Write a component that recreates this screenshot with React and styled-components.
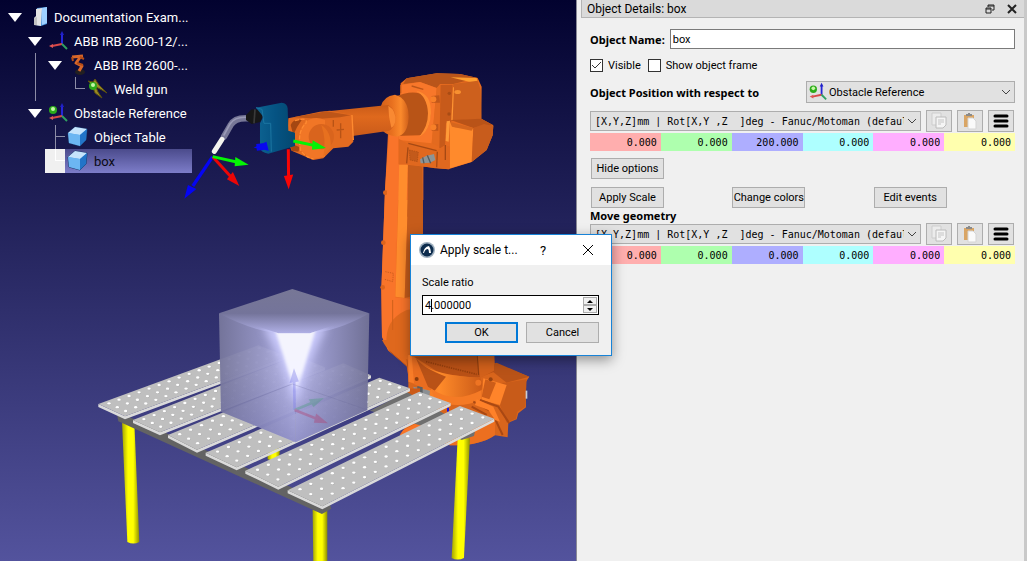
import React from 'react';
import styled, { createGlobalStyle, css } from 'styled-components';

const treeRows = [
    { label: 'Documentation Exam...', cells: ['open'], icon: 'station' },
    { label: 'ABB IRB 2600-12/...', cells: ['none', 'open'], icon: 'frame' },
    { label: 'ABB IRB 2600-...', cells: ['none', 'line', 'open'], icon: 'robot' },
    { label: 'Weld gun', cells: ['none', 'line', 'none', 'corner'], icon: 'tool' },
    { label: 'Obstacle Reference', cells: ['none', 'open'], icon: 'activeFrame' },
    { label: 'Object Table', cells: ['none', 'none', 'tee'], icon: 'object' },
    { label: 'box', cells: ['none', 'none', 'corner'], icon: 'object', selected: true },
];

const poseColors = ['#ffaeae', '#aeffae', '#aeaeff', '#aeffff', '#ffaeff', '#ffffae'];
const poseFormat = '[X,Y,Z]mm | Rot[X,Y ,Z\u00a0\u00a0]deg - Fanuc/Motoman (default)';

// corners of each board: left, front, right (front side), back (right side)
const boards = [
    [[25, 372], [105, 409], [590, 229], [505, 196]],
    [[129, 420], [210, 457], [705, 262], [620, 227]],
    [[234, 465], [321, 509], [843, 286], [760, 250]],
    [[347, 518], [440, 562], [960, 325], [868, 293]],
    [[466, 572], [565, 620], [1082, 369], [988, 335]],
    [[593, 631], [697, 679], [1213, 416], [1110, 378]],
];

const lerp = (a, b, t) => [a[0] + (b[0] - a[0]) * t, a[1] + (b[1] - a[1]) * t];
const points = (list) => list.map((p) => p.join(',')).join(' ');

const TreeIcon = ({ name }) => {
    if (name === 'station') {
        return (
            <svg width="24" height="24" viewBox="0 0 24 24" aria-hidden="true">
                <path d="M12 3 L22 2 L22 19 L16 21 L11 20 Z" fill="#4a94de" />
                <path d="M17 3 L22 2 L22 18 L17 20 Z" fill="#9fd0ff" />
                <path d="M11 4 L17 3 L16 21 L9 20 L9 13 L11 11 Z" fill="#e4e4e4" />
                <path d="M9 13 L12 12 L12 20 L9 20 Z" fill="#c2c2c2" />
            </svg>
        );
    }
    if (name === 'robot') {
        return (
            <svg width="24" height="24" viewBox="0 0 24 24" aria-hidden="true">
                <ellipse cx="15" cy="19" rx="5" ry="3" fill="#221f22" />
                <path d="M7 4 L18 3 M16 3 L11 10 L17 13 L14 18" fill="none" stroke="#d8672a" strokeWidth="3" strokeLinejoin="round" />
                <path d="M7 4 L8 8 M15 4 L19 6 M12 10 L18 12" fill="none" stroke="#b54c17" strokeWidth="2" />
            </svg>
        );
    }
    if (name === 'tool') {
        return (
            <svg width="24" height="24" viewBox="0 0 24 24" aria-hidden="true">
                <path d="M3 4 L8 5 L10 2 L14 8 L22 16 L17 13 L11 10 L13 15 L17 21 L10 16 L7 8 Z" fill="#9a8a24" stroke="#5a5010" />
                <Ball cx={8} cy={9} />
            </svg>
        );
    }
    if (name === 'object') {
        return (
            <svg width="24" height="24" viewBox="0 0 24 24" aria-hidden="true">
                <path d="M3 8 L10 2 L22 4 L21 15 L15 21 L4 18 Z" fill="#4ea3ea" stroke="#1c3a6c" strokeLinejoin="round" />
                <path d="M3 8 L10 2 L22 4 L15 10 Z" fill="#c6e4fc" />
                <path d="M3 8 L15 10 L15 21 L4 18 Z" fill="#6cb6f2" />
                <path d="M15 10 L22 4 L21 15 L15 21 Z" fill="#2274c8" />
            </svg>
        );
    }
    return (
        <svg width="24" height="24" viewBox="0 0 24 24" aria-hidden="true">
            <path d="M17 15 L17 5" stroke="#2525d8" strokeWidth="2" />
            <path d="M15 6 L17 2 L19 6 Z" fill="#2020c8" />
            <path d="M17 15 L7 17" stroke="#d84848" strokeWidth="2" />
            <path d="M4 17 L8 15 L8 19 Z" fill="#e05555" />
            <path d="M17 15 L22 20" stroke="#30a060" strokeWidth="2" />
            {name === 'activeFrame' && <Ball cx={8} cy={9} />}
        </svg>
    );
};

const Ball = ({ cx, cy }) => (
    <>
        <circle cx={cx} cy={cy} r="4" fill="#2cab1a" />
        <circle cx={cx} cy={cy - 1} r="2" fill="#c4f7a6" />
    </>
);

const Arrow = ({ from, to, color, width = 8 }) => {
    const angle = (Math.atan2(to[1] - from[1], to[0] - from[0]) * 180) / Math.PI;
    const end = lerp(to, from, 0.3);
    return (
        <g>
            <line x1={from[0]} y1={from[1]} x2={end[0]} y2={end[1]} stroke={color} strokeWidth={width} />
            <path d="M0 0 L-44 -14 L-40 14 Z" fill={color} transform={`translate(${to[0]} ${to[1]}) rotate(${angle})`} />
        </g>
    );
};

const Board = ({ corners }) => {
    const [left, front, right, back] = corners;
    const holes = [];
    for (let i = 0; i < 16; i++) {
        [0.15, 0.46, 0.77].forEach((v) => {
            const u = (i + 0.67) / 16;
            holes.push(lerp(lerp(left, front, v), lerp(back, right, v), u));
        });
    }
    const drop = (p) => [p[0], p[1] + 9];
    return (
        <g>
            <polygon points={points([left, front, right, drop(right), drop(front), drop(left)])} fill="#dadada" />
            <polygon points={points([left, front, right, back])} fill="#bfbfbf" />
            {holes.map((h, i) => (
                <g key={i}>
                    <ellipse cx={h[0] + 1} cy={h[1] + 1} rx="5.5" ry="4" fill="#b0b0b0" />
                    <ellipse cx={h[0]} cy={h[1]} rx="5" ry="3.5" fill="#fff" />
                </g>
            ))}
        </g>
    );
};

const Scene = () => (
    <SceneSvg viewBox="0 0 576 561" preserveAspectRatio="xMinYMin slice" role="img" aria-label="3D view">
        <defs>
            <linearGradient id="sky" x1="0" y1="0" x2="0" y2="1">
                <stop offset="0" stopColor="#02022f" />
                <stop offset="1" stopColor="#53539d" />
            </linearGradient>
            <linearGradient id="leg">
                <stop offset="0" stopColor="#a3a300" />
                <stop offset="0.35" stopColor="#ffff00" />
                <stop offset="0.65" stopColor="#ffff00" />
                <stop offset="1" stopColor="#8f8f00" />
            </linearGradient>
            <linearGradient id="arm" x1="0" y1="0" x2="0" y2="1">
                <stop offset="0" stopColor="#c95b18" />
                <stop offset="0.35" stopColor="#df691d" />
                <stop offset="1" stopColor="#c7591a" />
            </linearGradient>
            <linearGradient id="collar" x1="0" y1="0" x2="1" y2="0">
                <stop offset="0" stopColor="#d3601a" />
                <stop offset="0.4" stopColor="#e8701f" />
                <stop offset="0.72" stopColor="#fb8a2c" />
                <stop offset="1" stopColor="#d0601a" />
            </linearGradient>
            <linearGradient id="ring">
                <stop offset="0" stopColor="#e8691b" />
                <stop offset="0.35" stopColor="#ff8b2a" />
                <stop offset="1" stopColor="#cb5a17" />
            </linearGradient>
            <linearGradient id="cubeTop" x1="0" y1="0" x2="0" y2="1">
                <stop offset="0" stopColor="#777796" />
                <stop offset="0.55" stopColor="#74749a" />
                <stop offset="1" stopColor="#b0b0e6" />
            </linearGradient>
            <linearGradient id="cubeLeft">
                <stop offset="0" stopColor="#77779c" />
                <stop offset="0.55" stopColor="#9797c6" />
                <stop offset="1" stopColor="#bcbcf0" />
            </linearGradient>
            <linearGradient id="cubeRight">
                <stop offset="0" stopColor="#bcbcf0" />
                <stop offset="0.45" stopColor="#9797c6" />
                <stop offset="1" stopColor="#737397" />
            </linearGradient>
            <linearGradient id="cubeFade" x1="0" y1="0" x2="0" y2="1">
                <stop offset="0.45" stopColor="#6c6ca0" stopOpacity="0" />
                <stop offset="1" stopColor="#6c6ca8" stopOpacity="0.5" />
            </linearGradient>
            <linearGradient id="glow" x1="0" y1="0" x2="0" y2="1">
                <stop offset="0" stopColor="#f4f4fc" />
                <stop offset="0.75" stopColor="#f4f4ff" />
                <stop offset="1" stopColor="#e0e0ff" stopOpacity="0.8" />
            </linearGradient>
            <linearGradient id="mount">
                <stop offset="0" stopColor="#0d6492" />
                <stop offset="0.5" stopColor="#055383" />
                <stop offset="1" stopColor="#04486f" />
            </linearGradient>
            <filter id="haze" x="-50%" y="-20%" width="200%" height="140%">
                <feGaussianBlur stdDeviation="12" />
            </filter>
            <filter id="soft" x="-50%" y="-20%" width="200%" height="140%">
                <feGaussianBlur stdDeviation="5" />
            </filter>
            <clipPath id="cubeFront">
                <path d="M387 100 L565 160 L660 160 L838 100 L832 390 L617 487 L393 395 Z" />
            </clipPath>
        </defs>
        <rect width="1600" height="561" fill="url(#sky)" />

        {/* lower arm */}
        <g transform="translate(360 190) scale(0.3333)">
            <path d="M84 -170 L190 -170 L188 150 L200 480 L150 590 L140 528 L85 482 L66 440 L64 300 L75 0 Z" fill="#e9691f" />
            <path d="M87 -170 L120 -170 L106 322 L150 326 L155 360 L105 385 L82 440 L85 482 L66 440 L64 300 L75 0 Z" fill="#f9742a" />
            <path d="M118 -100 L146 -100 L145 0 L134 324 L106 320 L116 0 Z" fill="#ff8d2d" />
            <path d="M146 -100 L189 -100 L189 140 L152 140 L150 320 L134 324 L145 0 Z" fill="#c65c1b" />
            <path d="M80 465 Q72 390 140 360 L200 350 L200 540 L140 528 Z" fill="#df681d" />
            <path d="M98 330 L98 420" fill="none" stroke="#cf5f1b" strokeWidth="3" />
            <path d="M76 245 L100 250 L98 275 L74 268" fill="none" stroke="#b35017" strokeWidth="2" strokeDasharray="4 3" />
            <circle cx="76" cy="8" r="7" fill="#dd641c" />
            <circle cx="70" cy="158" r="7" fill="#dd641c" />
            <circle cx="68" cy="292" r="7" fill="#dd641c" />
            <path d="M140 500 L150 590 M88 482 L140 528" stroke="#b95317" strokeWidth="3" />
        </g>

        {/* base */}
        <g transform="translate(340 340) scale(0.3333)">
            <path d="M126 0 L210 0 L210 60 Q150 50 126 0 Z" fill="#df681d" />
            <path d="M205 40 L462 40 L464 70 L568 110 L558 125 L558 202 L535 220 L530 238 L505 248 L503 292 L465 286 Q420 318 330 316 L180 284 L240 200 L205 150 Z" fill="#d8651c" />
            <path d="M440 80 L470 68 L568 110 L500 128 Z" fill="#b95318" />
            <path d="M456 130 L500 128 L560 118 L556 200 L532 215 L528 236 L500 248 Z" fill="#c85b19" />
            <path d="M430 115 L500 135 L480 195 L425 180 Z" fill="#ff842a" />
            <path d="M436 118 L468 128 L448 178 L425 170 Z" fill="#cd5d19" />
            <path d="M222 50 L462 45 L463 95 L410 115 L300 100 Z" fill="#b95116" />
            <path d="M413 45 L463 45 L462 92 L420 115 Z" fill="#d2611b" />
            <path d="M228 62 Q290 110 420 112 Q440 150 400 175 L280 190 L228 130 Z" fill="url(#ring)" />
            <path d="M204 45 L228 55 L282 150 L262 150 L206 125 Z" fill="#e96d20" />
            <path d="M205 45 L215 45 L222 130 L206 125 Z" fill="#f87c28" />
            <path d="M228 55 Q250 85 318 110 L284 152 L264 140 Z" fill="#b95217" />
            <path d="M272 145 Q340 195 425 150 L425 180 Q350 210 285 180 Z" fill="#f57a25" />
            <path d="M258 65 L410 103" stroke="#963f0d" strokeWidth="5" strokeDasharray="4 3" />
            <path d="M412 48 L416 105" stroke="#8f3e0f" strokeWidth="3" />
            <path d="M400 185 L455 215 L488 285 M395 200 L440 225 M420 180 L475 200 L508 250" fill="none" stroke="#a94813" strokeWidth="6" />
            <path d="M410 178 L460 200 L480 245 L465 240 L445 210 L405 195 Z" fill="#ff8129" />
            <circle cx="230" cy="117" r="6" fill="#8a3c0d" />
            <circle cx="415" cy="128" r="9" fill="#ee7423" />
            <circle cx="452" cy="118" r="6" fill="#984310" />
            <path d="M330 210 Q420 250 465 240 L465 285 Q420 318 330 316 Z" fill="#ec6f20" />
            <path d="M220 140 L270 152 L268 175 L225 160 Z" fill="#8b8f93" />
            <path d="M232 138 L248 142 L248 165 L232 162 Z" fill="#5b6064" />
            <path d="M200 146 L240 145 L240 165 L200 170 Z" fill="#cc5a17" />
            <path d="M180 284 L190 270 L240 245 L260 255 L200 290 Z" fill="#f97525" />
            <rect x="557" y="152" width="5" height="24" fill="#c8ccd6" />
            <rect x="321" y="203" width="6" height="12" fill="#1515e8" />
        </g>

        {/* upper arm and wrist */}
        <g transform="translate(340 60) scale(0.3333)">
            <path d="M147 225 L250 225 L250 420 L140 420 Z" fill="#f9742a" />
            <path d="M178 300 L204 300 L200 420 L175 420 Z" fill="#ff8d2d" />
            <path d="M204 300 L248 310 L249 470 L202 470 Z" fill="#c65c1b" />
            <path d="M182 70 L200 55 L290 40 L360 42 L413 54 L425 80 L424 176 L460 196 L458 226 L440 270 L395 306 L325 328 L200 314 L176 314 L176 235 Z" fill="#e66b1f" />
            <path d="M200 55 L290 40 L360 42 L413 54 L340 72 L300 72 L290 84 L240 66 L190 72 Z" fill="#b9551a" />
            <path d="M332 52 L410 54 L414 70 L390 66 Z" fill="#ffa02f" />
            <path d="M340 72 L413 62 L422 90 L424 176 L335 182 Z" fill="#cd601d" />
            <path d="M182 75 L240 66 L290 84 L275 250 L176 240 Z" fill="#f8772a" />
            <path d="M290 84 L305 75 L298 260 L275 250 Z" fill="#e36a1f" />
            <path d="M302 75 L338 74 L334 185 L318 190 L315 260 L298 265 Z" fill="#c75a1a" />
            <path d="M339 82 L342 82 L338 180 L334 180 Z" fill="#ff9534" />
            <path d="M332 180 L424 176 L460 196 L400 204 Z" fill="#b95318" />
            <path d="M330 186 L345 202 L400 204 L396 305 L330 325 Z" fill="#ff8a2c" />
            <path d="M330 186 L400 204 L395 212 L336 200 Z" fill="#d5661e" />
            <path d="M400 204 L432 192 L460 198 L458 226 L440 270 L395 306 Z" fill="#c85c1c" />
            <path d="M320 184 L330 182 L326 245 L317 243 Z" fill="#ff9a38" />
            <path d="M200 250 L290 272 L315 255 L330 260 L328 328 L285 325 L200 312 L176 312 L176 236 Z" fill="#e0681f" />
            <path d="M205 250 L290 272 M204 262 L200 310 M292 275 L290 322 M316 255 L316 300" fill="none" stroke="#a54914" strokeWidth="4" />
            <path d="M208 270 L235 276 L232 305 L210 300 Z" fill="#c35a1b" stroke="#a84c14" strokeWidth="2" strokeDasharray="4 3" />
            <path d="M160 112 Q260 70 272 150 Q272 215 238 226 L165 228 Z" fill="#b85417" />
            <path d="M228 92 Q275 100 273 160 Q270 215 238 230 Q264 200 264 160 Q262 110 228 92 Z" fill="#ff8c31" />
            <path d="M122 140 Q130 108 165 104 Q205 115 206 170 Q204 225 170 230 Q140 225 128 212 Z" fill="url(#collar)" />
            <path d="M-30 153 L145 135 Q170 150 166 185 Q160 205 148 212 L-20 236 Z" fill="url(#arm)" />
            <path d="M145 137 Q170 152 166 185 Q162 200 154 203 Q145 170 145 137 Z" fill="#f98932" />
            <path d="M275 108 L298 106 L300 128 L275 128 Z M275 194 L295 192 L295 212 L275 212 Z" fill="#c1571a" />
            <circle cx="280" cy="118" r="9" fill="#f88028" />
            <circle cx="280" cy="202" r="9" fill="#f88028" />
            <ellipse cx="353" cy="96" rx="10" ry="6" fill="#f79030" />
            <circle cx="328" cy="100" r="5" fill="#a94c15" />
            <circle cx="327" cy="162" r="5" fill="#a94c15" />
            <path d="M240 298 L258 288 L282 282 L286 300 L270 308 L242 310 Z" fill="#8e9496" />
            <path d="M262 286 L272 310 M248 292 L252 310" stroke="#555b5e" strokeWidth="4" />
            <path d="M182 75 L182 100 M215 78 L250 88" stroke="#bd5619" strokeWidth="4" />
        </g>
        <g transform="translate(180 60) scale(0.3333)">
            <path d="M325 175 L420 155 L450 152 L515 165 L520 245 L505 260 L460 265 L430 295 L400 300 L335 272 L322 240 Z" fill="#e36b20" />
            <path d="M340 172 L440 154 L512 166 L480 172 L420 176 Z" fill="#bd5518" />
            <path d="M372 190 Q400 165 435 180 L435 290 L395 298 L360 270 Q350 220 372 190 Z" fill="#f17626" />
            <circle cx="424" cy="230" r="38" fill="#d9641d" />
            <path d="M424 195 Q455 215 452 262 L430 290 Q440 240 424 195 Z" fill="#e7701f" />
            <path d="M332 195 Q340 175 365 180 Q350 200 340 225 Z M330 250 L360 262 L355 275 L335 272 Z" fill="#a54712" />
            <path d="M345 182 Q385 170 378 190 Q350 215 362 272 Q380 294 400 296" fill="none" stroke="#ff8b32" strokeWidth="4" strokeDasharray="12 5" />
            <path d="M482 190 L482 235 M470 210 L492 208 M460 180 L460 200" stroke="#b85316" strokeWidth="4" />
            <path d="M516 165 L520 240" stroke="#ff8a30" strokeWidth="4" />
            <g fill="none" strokeLinecap="round">
                <path d="M205 175 Q165 172 152 195 L132 230" stroke="#777797" strokeWidth="19" />
                <path d="M200 172 Q165 170 150 192 L132 225" stroke="#9a9ab6" strokeWidth="5" />
                <path d="M126 238 L103 274" stroke="#f4f4ef" strokeWidth="15" />
            </g>
            <path d="M198 165 L215 148 L238 150 L248 170 L240 186 L215 192 L198 180 Z" fill="#171717" />
            <path d="M225 148 L222 190" stroke="#3a3a3a" strokeWidth="5" />
            <path d="M228 143 L305 128 Q322 130 323 145 L325 212 L345 218 L345 258 L265 281 Q242 278 240 262 L240 190 L250 170 Z" fill="url(#mount)" />
            <path d="M228 143 L246 148 L252 190 L272 190 L274 275" fill="none" stroke="#1b75a2" strokeWidth="3" />
            <Arrow from={[250, 260]} to={[221, 263]} color="#0808ef" width={20} />
            <Arrow from={[325, 268]} to={[326, 388]} color="#f90505" width={9} />
            <Arrow from={[340, 243]} to={[438, 264]} color="#05f305" width={9} />
            <Arrow from={[98, 290]} to={[13, 416]} color="#0505f4" width={10} />
            <Arrow from={[98, 290]} to={[178, 378]} color="#ec0606" width={9} />
            <Arrow from={[98, 290]} to={[206, 314]} color="#05f505" width={9} />
        </g>

        {/* table */}
        <g transform="translate(90 280) scale(0.3333)">
            <path d="M96 425 L133 425 L148 786 Q130 795 112 786 Z" fill="url(#leg)" />
            <path d="M668 690 L712 690 L712 850 L670 850 Z" fill="url(#leg)" />
            <path d="M1103 475 L1140 475 L1122 834 Q1103 843 1085 834 Z" fill="url(#leg)" />
            <path d="M533 505 L570 505 L568 532 Q550 545 533 538 Z" fill="url(#leg)" />
            <path d="M82 408 L110 408 L720 672 L724 686 L696 702 L85 424 Z" fill="#636363" />
            <path d="M840 392 L950 335 L1155 455 L1152 468 L1115 480 L1090 465 Z" fill="#6f6f6f" />
            {boards.map((corners, i) => (
                <Board key={i} corners={corners} />
            ))}
            <path d="M387 100 L612 160 L617 487 L393 395 Z" fill="url(#cubeLeft)" fillOpacity="0.95" />
            <path d="M838 100 L612 160 L617 487 L832 390 Z" fill="url(#cubeRight)" fillOpacity="0.95" />
            <path d="M387 100 L612 160 L838 100 L832 390 L617 487 L393 395 Z" fill="url(#cubeFade)" />
            <path d="M387 100 L607 27 L838 100 Q740 155 660 160 L565 160 Q480 150 387 100 Z" fill="url(#cubeTop)" />
            <g clipPath="url(#cubeFront)">
                <path d="M520 140 L710 140 Q655 240 624 360 L610 360 Q580 240 520 140 Z" fill="#c9c9fb" filter="url(#haze)" />
                <path d="M552 140 L680 140 Q652 230 624 325 L610 325 Q582 230 552 140 Z" fill="url(#glow)" filter="url(#soft)" />
            </g>
            <path d="M393 395 L607 312 L832 390" fill="none" stroke="#676795" strokeWidth="3" opacity="0.25" />
            <g opacity="0.4">
                <Arrow from={[614, 390]} to={[612, 265]} color="#7c7ce8" width={8} />
                <Arrow from={[614, 390]} to={[702, 354]} color="#4d9a80" width={8} />
                <Arrow from={[614, 390]} to={[714, 430]} color="#b04070" width={8} />
            </g>
        </g>
    </SceneSvg>
);

const PoseEditor = ({ name, values }) => (
    <div>
        <PoseBar>
            <SelectBox $grow>
                <Select $mono aria-label={`${name} format`} defaultValue="fanuc">
                    <option value="fanuc">{poseFormat}</option>
                </Select>
                <Chevron />
            </SelectBox>
            <ToolButton aria-label="Copy pose" disabled>
                <svg width="18" height="18" viewBox="0 0 18 18">
                    <path d="M2 1 H11 V13 H2 Z" fill="#ececec" stroke="#cdcdcd" />
                    <path d="M6 5 H16 V13 L13 16 H6 Z" fill="#f5f5f5" stroke="#bcbcbc" />
                    <path d="M8 8 H14 M8 10 H14 M8 12 H11" stroke="#c5c5c5" />
                </svg>
            </ToolButton>
            <ToolButton aria-label="Paste pose">
                <svg width="18" height="18" viewBox="0 0 18 18">
                    <path d="M3 3 H13 V15 H3 Z" fill="#d9a565" />
                    <path d="M5 4 V2 H7 V1 H9 V2 H11 V4 Z" fill="#8a8a8a" />
                    <path d="M7 6 H12 L15 9 V17 H7 Z" fill="#fafafa" stroke="#d5d5d5" />
                </svg>
            </ToolButton>
            <ToolButton aria-label="Pose menu">
                <svg width="18" height="18" viewBox="0 0 18 18">
                    <path d="M3 4 H15 M3 9 H15 M3 14 H15" stroke="#000" strokeWidth="3" strokeLinecap="round" />
                </svg>
            </ToolButton>
        </PoseBar>
        <PoseValues>
            {values.map((value, i) => (
                <PoseInput key={i} $color={poseColors[i]} defaultValue={value} aria-label={`${name} value ${i + 1}`} />
            ))}
        </PoseValues>
    </div>
);

const Chevron = () => (
    <ChevronSvg width="10" height="6" viewBox="0 0 10 6" aria-hidden="true">
        <path d="M1 1 L5 5 L9 1" fill="none" stroke="#444" />
    </ChevronSvg>
);

const ScaleDialog = () => (
    <Dialog role="dialog" aria-label="Apply scale">
        <DialogHeader>
            <svg width="16" height="16" viewBox="0 0 16 16" aria-hidden="true">
                <circle cx="8" cy="8" r="8" fill="#9fb0bf" />
                <circle cx="8" cy="8" r="6.5" fill="#0d2c4d" />
                <path d="M4 11 Q5 5 10 4 Q12 7 12 11 L10 11 Q10 8 9 7 Q6 7 5 11 Z" fill="#fff" />
            </svg>
            <DialogTitle>Apply scale t...</DialogTitle>
            <HelpButton aria-label="Help">?</HelpButton>
            <CloseButton aria-label="Close dialog">
                <svg width="12" height="12" viewBox="0 0 12 12">
                    <path d="M1 1 L11 11 M11 1 L1 11" stroke="#000" />
                </svg>
            </CloseButton>
        </DialogHeader>
        <DialogBody>
            <label htmlFor="scale-ratio">Scale ratio</label>
            <SpinBox>
                <SpinInput id="scale-ratio" defaultValue="4.000000" />
                <TextCursor />
                <SpinButtons>
                    <SpinButton aria-label="Increase">
                        <svg width="6" height="3" viewBox="0 0 6 3">
                            <path d="M0 3 L3 0 L6 3 Z" />
                        </svg>
                    </SpinButton>
                    <SpinButton aria-label="Decrease">
                        <svg width="6" height="3" viewBox="0 0 6 3">
                            <path d="M0 0 L3 3 L6 0 Z" />
                        </svg>
                    </SpinButton>
                </SpinButtons>
            </SpinBox>
            <DialogActions>
                <Button $primary>OK</Button>
                <Button>Cancel</Button>
            </DialogActions>
        </DialogBody>
    </Dialog>
);

const App = () => {
    return (
        <>
            <GlobalStyle />
            <Window>
                <Viewport>
                    <Scene />
                    <Tree role="tree">
                        {treeRows.map((row) => (
                            <TreeRow key={row.label} role="treeitem" aria-selected={!!row.selected}>
                                {row.cells.map((cell, i) => (
                                    <Branch key={i} $type={cell} $selected={row.selected && i === row.cells.length - 1}>
                                        {cell === 'open' && (
                                            <svg width="14" height="9" viewBox="0 0 14 9">
                                                <path d="M0 0 H14 L7 9 Z" fill="#fff" />
                                            </svg>
                                        )}
                                    </Branch>
                                ))}
                                <TreeLabel $selected={row.selected}>
                                    <TreeIcon name={row.icon} />
                                    {row.label}
                                </TreeLabel>
                            </TreeRow>
                        ))}
                    </Tree>
                </Viewport>
                <Dock>
                    <DockTitle>
                        <DockName>Object Details: box</DockName>
                        <DockButton aria-label="Float panel">
                            <svg width="10" height="10" viewBox="0 0 10 10">
                                <path d="M3 3 V1 H9 V6 H7 M1 4 H6 V9 H1 Z M1 5 H6 M3 2 H9" fill="none" stroke="#222" />
                            </svg>
                        </DockButton>
                        <DockButton aria-label="Close panel">
                            <svg width="10" height="10" viewBox="0 0 10 10">
                                <path d="M1 1 L9 9 M9 1 L1 9" stroke="#222" strokeWidth="2" />
                            </svg>
                        </DockButton>
                    </DockTitle>
                    <Form>
                        <NameRow>
                            <BoldLabel htmlFor="object-name">Object Name:</BoldLabel>
                            <NameInput id="object-name" defaultValue="box" />
                        </NameRow>
                        <CheckRow>
                            <CheckLabel>
                                <CheckBox type="checkbox" defaultChecked />
                                Visible
                            </CheckLabel>
                            <CheckLabel>
                                <CheckBox type="checkbox" />
                                Show object frame
                            </CheckLabel>
                        </CheckRow>
                        <ReferenceRow>
                            <BoldLabel htmlFor="reference">Object Position with respect to</BoldLabel>
                            <SelectBox>
                                <SelectIcon>
                                    <TreeIcon name="activeFrame" />
                                </SelectIcon>
                                <Select id="reference" $icon defaultValue="obstacle">
                                    <option value="obstacle">Obstacle Reference</option>
                                </Select>
                                <Chevron />
                            </SelectBox>
                        </ReferenceRow>
                        <PoseEditor name="Position" values={['0.000', '0.000', '200.000', '0.000', '0.000', '0.000']} />
                        <ButtonRow>
                            <Button>Hide options</Button>
                        </ButtonRow>
                        <ButtonRow>
                            <Button>Apply Scale</Button>
                            <Button>Change colors</Button>
                            <Button>Edit events</Button>
                        </ButtonRow>
                        <SectionTitle>Move geometry</SectionTitle>
                        <PoseEditor name="Geometry" values={['0.000', '0.000', '0.000', '0.000', '0.000', '0.000']} />
                    </Form>
                </Dock>
                <ScaleDialog />
            </Window>
        </>
    );
};

export default App;

const GlobalStyle = createGlobalStyle`
    * {
        box-sizing: border-box;
    }
    body {
        margin: 0;
        font-family: Roboto, sans-serif;
        font-size: 11px;
        color: #000;
    }
    button, input, select {
        margin: 0;
        padding: 0;
        font: inherit;
        color: inherit;
        border-radius: 0;
    }
    svg {
        flex-shrink: 0;
    }
`;

const flexCenter = css`
    display: flex;
    align-items: center;
    justify-content: center;
`;

const Window = styled.main`
    position: relative;
    display: grid;
    grid-template-columns: minmax(0, 576fr) minmax(0, 451fr);
    min-height: 100vh;
    overflow: hidden;
`;

const Viewport = styled.section`
    position: relative;
    overflow: hidden;
    background: #53539d;
`;

const SceneSvg = styled.svg`
    position: absolute;
    inset: 0;
    width: 100%;
    height: 100%;
`;

const Tree = styled.div`
    position: relative;
    width: 192px;
    padding: 5px 0 0 5px;
    font-size: 13px;
    color: #fff;
`;

const TreeRow = styled.div`
    display: flex;
    height: 24px;
`;

const Branch = styled.span`
    ${flexCenter};
    width: 20px;
    flex-shrink: 0;
    background-color: ${(props) => (props.$selected ? '#f0f0f0' : 'transparent')};
    --line: ${(props) => (props.$selected ? '#ffffff' : '#8c8ca6')};
    background-repeat: no-repeat;
    background-position: 10px 0, 10px 11px;
    ${(props) =>
        props.$type === 'line' &&
        css`
            background-image: linear-gradient(var(--line), var(--line));
            background-size: 1px 24px;
        `}
    ${(props) =>
        props.$type === 'tee' &&
        css`
            background-image: linear-gradient(var(--line), var(--line)), linear-gradient(var(--line), var(--line));
            background-size: 1px 24px, 10px 1px;
        `}
    ${(props) =>
        props.$type === 'corner' &&
        css`
            background-image: linear-gradient(var(--line), var(--line)), linear-gradient(var(--line), var(--line));
            background-size: 1px 12px, 10px 1px;
        `}
`;

const TreeLabel = styled.span`
    display: flex;
    align-items: center;
    gap: 5px;
    flex: 1;
    white-space: nowrap;
    color: ${(props) => (props.$selected ? '#0a0a14' : '#fff')};
    background: ${(props) => (props.$selected ? 'linear-gradient(#4b4b8c, #7d7dc9)' : 'none')};
`;

const Dock = styled.aside`
    background: #f0f0f0;
    border-left: 1px solid #8a8a96;
    border-right: 3px solid #c9c9c9;
`;

const DockTitle = styled.header`
    display: flex;
    align-items: center;
    gap: 10px;
    height: 18px;
    margin-left: 4px;
    padding: 0 6px 0 5px;
    background: #dadada;
    border: solid #b4b4b4;
    border-width: 0 0 1px 1px;
    font-size: 12px;
`;

const DockName = styled.span`
    flex: 1;
`;

const DockButton = styled.button`
    ${flexCenter};
    width: 12px;
    height: 12px;
    border: none;
    background: none;
`;

const Form = styled.div`
    display: flex;
    flex-direction: column;
    gap: 7px;
    padding: 11px 9px 0 13px;
`;

const NameRow = styled.div`
    display: flex;
    align-items: center;
    gap: 5px;
`;

const BoldLabel = styled.label`
    font-family: 'Noto Sans', sans-serif;
    font-weight: bold;
    white-space: nowrap;
`;

const NameInput = styled.input`
    flex: 1;
    min-width: 0;
    height: 20px;
    padding: 0 2px;
    background: #fff;
    border: 1px solid #7a7a7a;
`;

const CheckRow = styled.div`
    display: flex;
    gap: 7px;
    height: 18px;
`;

const CheckLabel = styled.label`
    display: flex;
    align-items: center;
    gap: 5px;
`;

const CheckBox = styled.input`
    appearance: none;
    width: 13px;
    height: 13px;
    border: 1px solid #333;
    background: #fff;
    &:checked {
        background: #fff
            url("data:image/svg+xml,%3Csvg xmlns='http://www.w3.org/2000/svg' viewBox='0 0 11 11'%3E%3Cpath d='M1 5 L4 8 L10 2' fill='none' stroke='%23333'/%3E%3C/svg%3E");
    }
`;

const ReferenceRow = styled.div`
    display: flex;
    align-items: center;
    justify-content: space-between;
`;

const SelectBox = styled.div`
    position: relative;
    width: ${(props) => (props.$grow ? 'auto' : '209px')};
    flex: ${(props) => (props.$grow ? '1' : 'none')};
    min-width: 0;
`;

const Select = styled.select`
    display: block;
    appearance: none;
    width: 100%;
    height: ${(props) => (props.$mono ? '20px' : '22px')};
    padding: 0 16px 0 ${(props) => (props.$icon ? '22px' : '4px')};
    background: #e1e1e1;
    border: 1px solid #adadad;
    ${(props) =>
        props.$mono &&
        css`
            font-family: 'DejaVu Sans Mono', monospace;
            font-size: 10px;
        `}
`;

const SelectIcon = styled.span`
    position: absolute;
    top: 0;
    left: 0;
    height: 22px;
    pointer-events: none;
    svg {
        width: 22px;
        height: 22px;
    }
`;

const ChevronSvg = styled.svg`
    position: absolute;
    top: 50%;
    right: 4px;
    margin-top: -3px;
    pointer-events: none;
`;

const PoseBar = styled.div`
    display: flex;
    align-items: center;
    gap: 5px;
    padding-right: 1px;
`;

const ToolButton = styled.button`
    ${flexCenter};
    width: 26px;
    height: 22px;
    background: #e1e1e1;
    border: 1px solid #adadad;
`;

const PoseValues = styled.div`
    display: grid;
    grid-template-columns: repeat(6, minmax(0, 1fr));
    margin-top: 1px;
`;

const PoseInput = styled.input`
    min-width: 0;
    height: 18px;
    padding: 0 4px;
    border: none;
    background: ${(props) => props.$color};
    font-family: 'DejaVu Sans Mono', monospace;
    font-size: 10px;
    text-align: right;
`;

const ButtonRow = styled.div`
    display: grid;
    grid-template-columns: repeat(3, minmax(0, 1fr));
    height: 22px;
    padding-left: 1px;
`;

const Button = styled.button`
    width: 73px;
    height: 21px;
    background: #e1e1e1;
    border: ${(props) => (props.$primary ? '2px solid #0078d7' : '1px solid #adadad')};
    white-space: nowrap;
`;

const SectionTitle = styled.h2`
    height: 14px;
    margin: -7px 0;
    font-family: 'Noto Sans', sans-serif;
    font-size: 11px;
    line-height: 14px;
`;

const Dialog = styled.div`
    position: absolute;
    top: 234px;
    left: 410px;
    width: 202px;
    background: #f0f0f0;
    border: 1px solid #1883d7;
    box-shadow: 0 4px 12px rgba(0, 0, 0, 0.4);
`;

const DialogHeader = styled.header`
    display: flex;
    align-items: center;
    height: 30px;
    padding: 0 17px 0 8px;
    gap: 5px;
    background: #fff;
`;

const DialogTitle = styled.span`
    flex: 1;
    font-size: 12px;
    white-space: nowrap;
`;

const HelpButton = styled.button`
    width: 16px;
    margin-right: 26px;
    border: none;
    background: none;
    font-size: 13px;
`;

const CloseButton = styled.button`
    ${flexCenter};
    width: 12px;
    height: 12px;
    border: none;
    background: none;
`;

const DialogBody = styled.div`
    padding: 10px 12px 12px 11px;
    label {
        display: block;
        line-height: 16px;
    }
`;

const SpinBox = styled.div`
    position: relative;
    display: flex;
    height: 20px;
    margin-top: 4px;
    padding: 1px;
    background: #fff;
    border: 1px solid #000;
`;

const SpinInput = styled.input`
    flex: 1;
    min-width: 0;
    padding: 0 1px;
    border: none;
    outline: none;
    background: none;
`;

const TextCursor = styled.span`
    position: absolute;
    top: 3px;
    left: 8px;
    width: 1px;
    height: 13px;
    background: #000;
`;

const SpinButtons = styled.div`
    display: flex;
    flex-direction: column;
    width: 14px;
`;

const SpinButton = styled.button`
    ${flexCenter};
    flex: 1;
    background: #f0f0f0;
    border: 1px solid #acacac;
`;

const DialogActions = styled.div`
    display: flex;
    justify-content: flex-end;
    gap: 8px;
    margin-top: 7px;
`;
